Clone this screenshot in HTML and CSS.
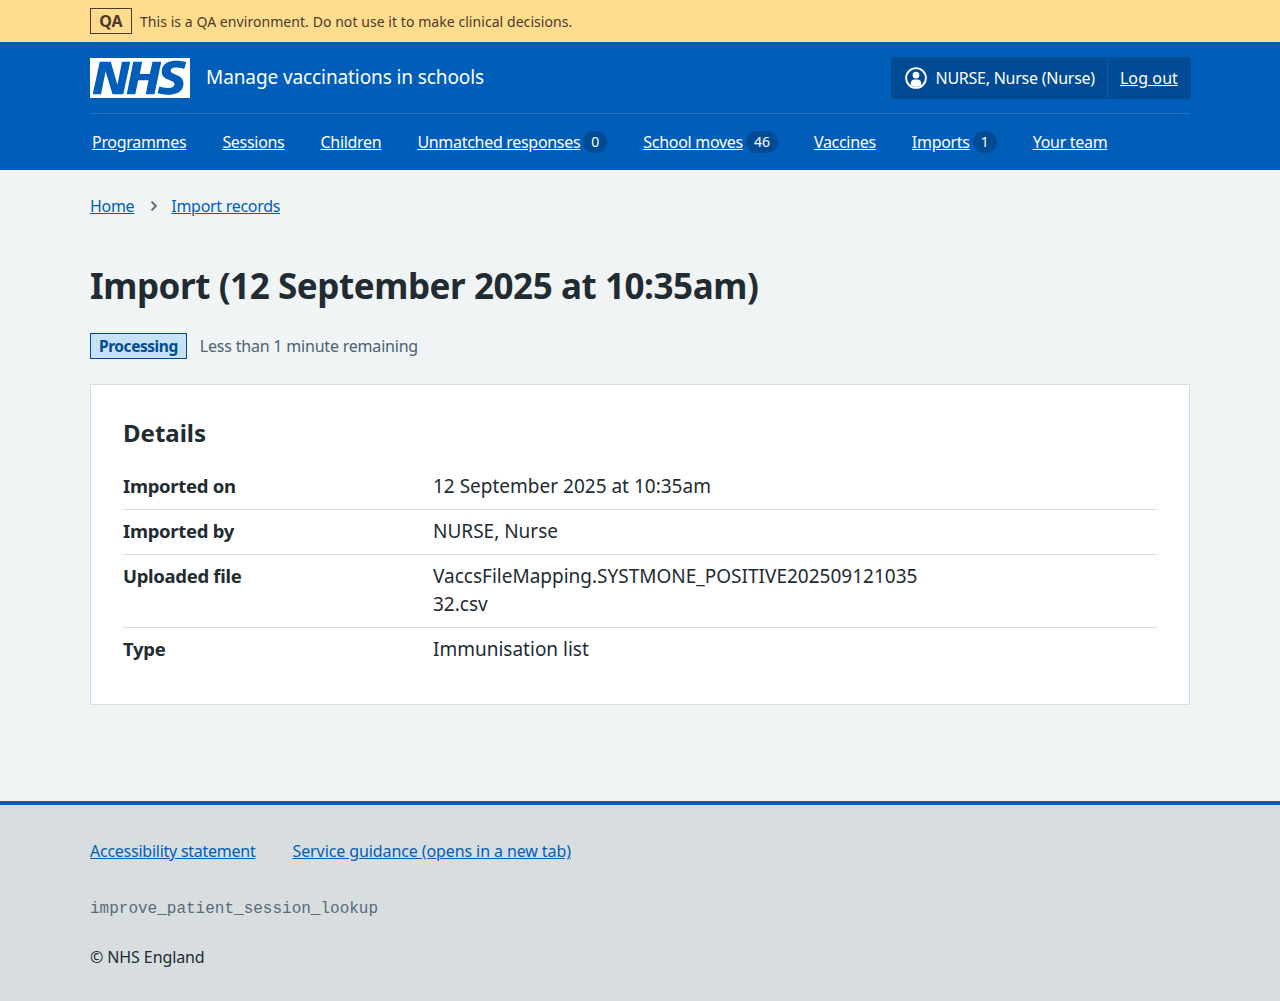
FILE: index.html
```html
<!DOCTYPE html>
<html lang="en">
<head>
    <meta charset="UTF-8">
    <title>Import – Manage vaccinations in schools</title>
    <link rel="stylesheet" href="styles.css">
</head>
<body>
    <div class="env-banner">
        <div class="container env-inner">
            <strong class="env-tag">QA</strong>
            <span class="env-text">This is a QA environment. Do not use it to make clinical decisions.</span>
        </div>
    </div>

    <header class="site-header">
        <div class="container">
            <div class="header-top">
                <a class="brand" href="#">
                    <svg class="logo" viewBox="0 0 40 16" width="100" height="40" aria-label="NHS">
                        <path fill="#fff" d="M0 0h40v16H0z"></path>
                        <path fill="#005eb8" d="M3.9 1.5h4.4l2.6 9h.1l1.8-9h3.3l-2.8 13H9l-2.7-9h-.1l-1.8 9H1.1M17.3 1.5h3.6l-1 4.9h4L25 1.5h3.5l-2.7 13h-3.5l1.1-5.6h-4.1l-1.2 5.6h-3.4M37.7 4.4c-.7-.3-1.6-.6-2.9-.6-1.4 0-2.5.2-2.5 1.3 0 1.8 5.1 1.2 5.1 5.1 0 3.6-3.3 4.5-6.4 4.5-1.3 0-2.9-.3-4-.7l.8-2.7c.7.4 2.1.7 3.2.7s2.8-.2 2.8-1.5c0-2.1-5.1-1.3-5.1-5 0-3.4 2.9-4.4 5.8-4.4 1.6 0 3.1.2 4 .6"></path>
                    </svg>
                    <span class="service-name">Manage vaccinations in schools</span>
                </a>
                <div class="account">
                    <div class="account-user">
                        <svg class="account-icon" viewBox="0 0 20 20" width="22" height="22">
                            <circle cx="10" cy="10" r="9" fill="none" stroke="#fff" stroke-width="1.7"></circle>
                            <circle cx="10" cy="7.4" r="3" fill="#fff"></circle>
                            <path fill="#fff" d="M5.2 16.4v-1.6c0-2 1.6-3.4 3.4-3.4h2.8c1.8 0 3.4 1.4 3.4 3.4v1.6c-1.3 1-3 1.7-4.8 1.7s-3.5-.7-4.8-1.7z"></path>
                        </svg>
                        <span>NURSE, Nurse (Nurse)</span>
                    </div>
                    <a class="account-logout" href="#">Log out</a>
                </div>
            </div>
            <nav class="main-nav">
                <a href="#"><span class="nav-link">Programmes</span></a>
                <a href="#"><span class="nav-link">Sessions</span></a>
                <a href="#"><span class="nav-link">Children</span></a>
                <a href="#"><span class="nav-link">Unmatched responses</span><span class="count">0</span></a>
                <a href="#"><span class="nav-link">School moves</span><span class="count">46</span></a>
                <a href="#"><span class="nav-link">Vaccines</span></a>
                <a href="#"><span class="nav-link">Imports</span><span class="count">1</span></a>
                <a href="#"><span class="nav-link">Your team</span></a>
            </nav>
        </div>
    </header>

    <main class="container page">
        <nav class="breadcrumb">
            <a href="#">Home</a>
            <svg class="crumb-arrow" viewBox="0 0 24 24" width="18" height="18">
                <path fill="#5f6770" stroke="#5f6770" stroke-width="0.8" d="M15.5 12a1 1 0 0 1-.29.71l-5 5a1 1 0 0 1-1.42-1.42l4.3-4.29-4.3-4.29a1 1 0 0 1 1.42-1.42l5 5a1 1 0 0 1 .29.71z"></path>
            </svg>
            <a href="#">Import records</a>
        </nav>

        <h1 class="page-title">Import (12 September 2025 at 10:35am)</h1>

        <p class="status-line">
            <strong class="tag">Processing</strong>
            <span class="status-hint">Less than 1 minute remaining</span>
        </p>

        <section class="card">
            <h2 class="card-title">Details</h2>
            <dl class="summary">
                <div class="summary-row">
                    <dt>Imported on</dt>
                    <dd>12 September 2025 at 10:35am</dd>
                </div>
                <div class="summary-row">
                    <dt>Imported by</dt>
                    <dd>NURSE, Nurse</dd>
                </div>
                <div class="summary-row">
                    <dt>Uploaded file</dt>
                    <dd>VaccsFileMapping.SYSTMONE_POSITIVE20250912103532.csv</dd>
                </div>
                <div class="summary-row">
                    <dt>Type</dt>
                    <dd>Immunisation list</dd>
                </div>
            </dl>
        </section>
    </main>

    <footer class="site-footer">
        <div class="container">
            <ul class="footer-links">
                <li class="footer-first"><a href="#">Accessibility statement</a></li>
                <li><a href="#">Service guidance (opens in a new tab)</a></li>
            </ul>
            <p class="branch">improve_patient_session_lookup</p>
            <p class="copyright">© NHS England</p>
        </div>
    </footer>
</body>
</html>
```

FILE: styles.css
```css
* {
    box-sizing: border-box;
}

body {
    margin: 0;
    font-family: "Noto Sans", Arial, sans-serif;
    font-size: 19px;
    line-height: 28px;
    color: #212b32;
    background-color: #f0f4f5;
}

a {
    color: #005eb8;
}

.container {
    width: 1100px;
    margin: 0 auto;
}

.env-banner {
    height: 42px;
    background-color: #ffdc8e;
    color: #4c3a2c;
    font-size: 14px;
    line-height: 20px;
}

.env-inner {
    display: flex;
    align-items: center;
    gap: 8px;
    height: 100%;
}

.env-tag {
    width: 42px;
    height: 26px;
    border: 1px solid #4c3a2c;
    font-size: 16px;
    line-height: 24px;
    text-align: center;
}

.env-text {
    margin-top: 2px;
    letter-spacing: 0.06px;
}

.site-header {
    height: 128px;
    background-color: #005eb8;
    color: #fff;
}

.site-header a {
    color: #fff;
}

.header-top {
    display: flex;
    justify-content: space-between;
    align-items: center;
    height: 72px;
    border-bottom: 1px solid #2673c2;
    padding-top: 1px;
}

.brand {
    display: flex;
    align-items: center;
    gap: 16px;
    text-decoration: none;
}

.logo {
    display: block;
}

.service-name {
    font-size: 19px;
    letter-spacing: -0.1px;
    margin-top: -2px;
}

.account {
    display: flex;
    height: 42px;
    margin-right: -1px;
    padding: 1px 0;
    background-color: #004b93;
    border-radius: 4px;
    font-size: 16px;
}

.account-user {
    display: flex;
    align-items: center;
    gap: 9px;
    padding: 0 12px 0 14px;
    border-right: 1px solid #005eb8;
    letter-spacing: -0.25px;
}

.account-logout {
    display: flex;
    align-items: center;
    padding: 0 13px 0 12px;
    letter-spacing: 0.1px;
}

.main-nav {
    display: flex;
    gap: 36px;
    padding: 14px 2px 0;
    font-size: 16px;
    letter-spacing: -0.3px;
}

.main-nav a {
    display: flex;
    align-items: center;
    gap: 3px;
    height: 28px;
    text-decoration: none;
}

.nav-link {
    text-decoration: underline;
}

.count {
    min-width: 24px;
    height: 22px;
    padding: 0 8px;
    border-radius: 11px;
    background-color: #004b93;
    font-size: 14px;
    line-height: 22px;
    letter-spacing: 0;
    text-align: center;
}

.page {
    height: 631px;
    padding-top: 22px;
}

.breadcrumb {
    display: flex;
    align-items: center;
    gap: 9px;
    height: 28px;
    font-size: 16px;
    letter-spacing: -0.3px;
}

.crumb-arrow {
    margin-left: 2px;
    margin-right: -1px;
}

.page-title {
    margin: 42px 0 0;
    font-size: 35px;
    line-height: 48px;
    font-weight: 700;
    letter-spacing: -0.43px;
}

.status-line {
    display: flex;
    align-items: center;
    gap: 13px;
    margin: 22px 0 0;
    font-size: 16px;
}

.tag {
    height: 26px;
    padding: 0 8px;
    border: 1px solid #004b93;
    background-color: #c7e2f4;
    color: #004b93;
    font-size: 15.5px;
    line-height: 24px;
    letter-spacing: -0.45px;
}

.status-hint {
    color: #4c6272;
    letter-spacing: -0.2px;
}

.card {
    margin-top: 24px;
    padding: 32px;
    background-color: #fff;
    border: 1px solid #d8dde0;
}

.card-title {
    margin: 0 0 16px;
    font-size: 24px;
    line-height: 32px;
    font-weight: 700;
}

.summary {
    margin: 0;
}

.summary-row {
    display: flex;
    padding: 7px 0 9px;
    border-bottom: 1px solid #d8dde0;
}

.summary-row:last-child {
    border-bottom: none;
}

dt {
    width: 310px;
    font-size: 18.5px;
    font-weight: 700;
    letter-spacing: -0.3px;
}

dd {
    width: 490px;
    margin: 0;
    overflow-wrap: anywhere;
}

.site-footer {
    height: 200px;
    background-color: #d8dde0;
    border-top: 4px solid #005eb8;
    padding-top: 32px;
    font-size: 16px;
    letter-spacing: -0.1px;
}

.footer-links {
    display: flex;
    gap: 37px;
    margin: 0;
    padding: 0;
    list-style: none;
}

.footer-first {
    letter-spacing: -0.25px;
}

.branch {
    margin: 30px 0 0;
    font-family: "Liberation Mono", monospace;
    color: #5a6b78;
    letter-spacing: 0;
}

.copyright {
    margin: 20px 0 0;
}
```
